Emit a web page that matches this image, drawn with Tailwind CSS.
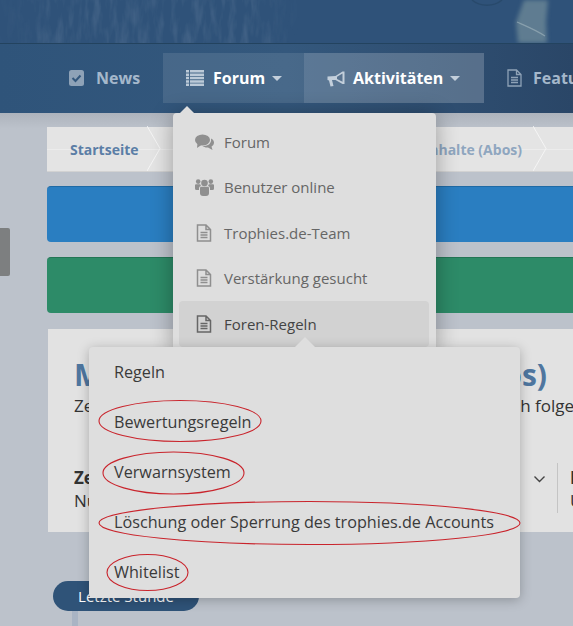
<!DOCTYPE html>
<html lang="de">

<head>
    <meta charset="UTF-8">
    <meta name="viewport" content="width=device-width, initial-scale=1.0">
    <title>Forum</title>
    <script src="https://cdn.jsdelivr.net/npm/@tailwindcss/browser@4"></script>
</head>

<body class="font-['Open_Sans',sans-serif]">
    <div class="relative w-[573px] h-[626px] overflow-hidden bg-[#bcc2cb]">

        <!-- banner -->
        <div class="relative h-[44px] overflow-hidden border-b border-[#23435f] bg-[#2f5279]">
            <svg class="absolute inset-0" width="573" height="43">
                <defs>
                    <filter id="grain"><feTurbulence type="fractalNoise" baseFrequency="0.14 0.035" numOctaves="3" seed="7" /><feColorMatrix values="0 0 0 0 0.72  0 0 0 0 0.8  0 0 0 0 0.88  0 0 0 1.1 -0.42" /></filter>
                    <linearGradient id="fade"><stop offset="0" stop-color="#fff" stop-opacity="0.1" /><stop offset="0.2" stop-color="#fff" /><stop offset="0.85" stop-color="#fff" /><stop offset="1" stop-color="#fff" stop-opacity="0" /></linearGradient>
                    <mask id="fademask"><rect width="300" height="43" fill="url(#fade)" /></mask>
                    <filter id="soft"><feGaussianBlur stdDeviation="2" /></filter>
                </defs>
                <g mask="url(#fademask)"><rect width="300" height="43" filter="url(#grain)" opacity="0.2" /></g>
                <path d="M518 43 L516 22 L524 0 L548 0 L546 22 L547 43 Z" fill="#6f8b99" opacity="0.75" filter="url(#soft)" />
                <path d="M517 22 C526 26 536 30 545 36" fill="none" stroke="#a4b8bf" stroke-width="1.2" opacity="0.6" />
                <path d="M472 0 C480 7 494 7 502 0" fill="none" stroke="#254563" stroke-width="1.5" opacity="0.6" />
            </svg>
        </div>

        <!-- nav -->
        <nav class="flex h-[69px] pl-[47px] pt-[9px] bg-gradient-to-r from-[#2f547a] via-[#34587d] to-[#2a4667] text-[16px] font-bold">
            <div class="flex w-[116px] h-[50px] shrink-0 items-center pl-[22px] text-[#a5b8cb]">
                <svg class="w-[16px] h-[16px]" viewBox="0 0 16 16"><rect width="15" height="16" rx="2.5" fill="#8ea2b7" /><path d="M3.5 8 L6.5 11 L11.5 5.5" fill="none" stroke="#34587d" stroke-width="2" /></svg>
                <span class="ml-[11px]">News</span>
            </div>
            <div class="flex w-[141px] h-[50px] shrink-0 items-center pl-[23px] bg-white/10 text-white">
                <svg class="w-[18px] h-[16px]" viewBox="0 0 18 16" fill="#bccad8"><path d="M0 0h3v2.5H0zM4 0h14v2.5H4zM0 3.4h3v2.5H0zM4 3.4h14v2.5H4zM0 6.8h3v2.5H0zM4 6.8h14v2.5H4zM0 10.2h3v2.5H0zM4 10.2h14v2.5H4zM0 13.6h3V16H0zM4 13.6h14V16H4z" /></svg>
                <span class="ml-[9px]">Forum</span>
                <span class="ml-[7px] w-0 h-0 border-x-[5px] border-x-transparent border-t-[5px] border-t-[#c3cfdb]"></span>
            </div>
            <div class="flex w-[180px] h-[50px] shrink-0 items-center pl-[23px] bg-white/20 text-white">
                <svg class="w-[18px] h-[17px]" viewBox="0 0 17 17" fill="#c3cfdb"><path d="M0 6.5 L8 6 L15 1.5 L17 1.5 L17 14 L15 14 L8 10 L4.5 10 L6 16 L3 16.5 L1.5 10.5 L0 10 Z" /><path d="M9.5 6.8 L15 3.6 L15 11.8 L9.5 8.9 Z" fill="#5a7490" /></svg>
                <span class="ml-[8px]">Aktivitäten</span>
                <span class="ml-[7px] w-0 h-0 border-x-[5px] border-x-transparent border-t-[5px] border-t-[#c3cfdb]"></span>
            </div>
            <div class="flex h-[50px] shrink-0 items-center pl-[23px] text-[#a5b8cb] whitespace-nowrap">
                <svg class="w-[15px] h-[18px]" viewBox="0 0 15 18" fill="none" stroke="#8ea2b7" stroke-width="1.3"><path d="M1 1h8.5L14 5.5V17H1zM9.5 1v4.5H14M4 8.5h7M4 11h7M4 13.5h7" /></svg>
                <span class="ml-[11px]">Features</span>
            </div>
        </nav>

        <!-- page -->
        <main class="flex flex-col pl-[47px] pt-[14px] bg-gradient-to-b from-[#adb3bc] from-0% to-[#bcc2cb] to-[3%]">
            <div class="relative flex h-[45px] w-[526px] shrink-0 items-center bg-[#e4e4e4] text-[14px] font-bold border-b border-[#d2d2d2] pt-[1px]">
                <div class="absolute left-0 right-0 top-[22px] h-px bg-white/30"></div>
                <div class="relative w-[114px] shrink-0 pl-[23px] text-[#5b7ea6]">Startseite
                    <svg class="absolute right-0 top-[-13px]" width="14" height="45" fill="none" stroke="#f5f5f5"><path d="M0 0 L13 22.5 L0 45" /></svg>
                </div>
                <div class="relative w-[386px] shrink-0 pr-[25px] text-right text-[#8fa6bf]">Ungelesene Inhalte (Abos)
                    <svg class="absolute right-0 top-[-13px]" width="14" height="45" fill="none" stroke="#f5f5f5"><path d="M0 0 L13 22.5 L0 45" /></svg>
                </div>
            </div>
            <div class="mt-[14px] h-[56px] w-[530px] shrink-0 rounded-[4px] bg-[#2a7ec1] border-t border-[#1f6aa5]"></div>
            <div class="mt-[15px] h-[56px] w-[530px] shrink-0 rounded-[4px] bg-[#2d8b68] border-t border-[#237555]"></div>
            <div class="mt-[16px] ml-[1px] h-[203px] w-[525px] shrink-0 bg-[#e2e2e2] pl-[26px] pt-[24px] text-[#333] overflow-hidden">
                <div class="flex w-[473px] justify-between text-[30px] leading-[44px] font-bold text-[#4f769f]">
                    <span>Mitglieder</span><span>(Abos)</span>
                </div>
                <div class="flex w-[560px] justify-between text-[17px] leading-[22px] -mt-[2px] whitespace-nowrap">
                    <span>Zeige alle Themen</span><span class="pr-[60px]">denen ich folge</span>
                </div>
                <div class="flex mt-[46px] h-[50px] text-[17px] leading-[23px] whitespace-nowrap">
                    <div class="w-[460px] shrink-0 pt-[3px]">
                        <div class="font-bold">Zeitraum</div>
                        <div>Nur heute</div>
                    </div>
                    <svg class="mt-[13px] shrink-0 w-[11px] h-[7px]" viewBox="0 0 11 7" fill="none" stroke="#444" stroke-width="1.4"><path d="M0.5 0.5 L5.5 5.5 L10.5 0.5" /></svg>
                    <div class="ml-[12px] w-px h-[50px] shrink-0 bg-[#c4c4c4]"></div>
                    <div class="ml-[12px] pt-[3px]">
                        <div class="font-bold">Inhalte</div>
                        <div>Unbegrenzt</div>
                    </div>
                </div>
            </div>
            <div class="mt-[49px] ml-[6px] flex h-[30px] w-[146px] shrink-0 items-center justify-center rounded-full bg-[#2f5378] text-[15px] text-white">Letzte Stunde</div>
            <div class="ml-[25px] h-[20px] w-[6px] shrink-0 bg-[#a9b4c4]"></div>
        </main>

        <!-- left tab -->
        <div class="absolute left-0 top-[228px] h-[48px] w-[10px] rounded-r-[2px] bg-[#7d7f80]"></div>

        <!-- forum dropdown -->
        <div class="absolute left-[173px] top-[113px] w-[263px] h-[240px] rounded-t-[4px] bg-[#dedede] shadow-[0_2px_22px_rgba(0,0,0,0.32)] px-[6px] pt-[6px] text-[15px] text-[#666]">
            <span class="absolute left-[7px] top-[-7px] w-0 h-0 border-x-[7px] border-x-transparent border-b-[7px] border-b-[#dedede]"></span>
            <div class="flex h-[45.5px] items-center pl-[16px]">
                <svg class="w-[19px] h-[16px]" viewBox="0 0 19 16" fill="#8f8f8f"><ellipse cx="7.5" cy="6" rx="7.5" ry="5.6" /><path d="M2.5 9 L2 14 L7 10.5Z" /><path d="M16 4.5 C18 5.5 19 7 19 8.5 C19 10.5 18 11.5 16.5 12.5 L17.5 16 L13 13.5 C11 13.7 8.5 13 7.5 12 C12 12.5 17 10 16 4.5Z" /></svg>
                <span class="ml-[10px]">Forum</span>
            </div>
            <div class="flex h-[45.5px] items-center pl-[16px]">
                <svg class="w-[19px] h-[18px]" viewBox="0 0 19 18" fill="#8f8f8f"><circle cx="9.5" cy="5" r="3.3" /><circle cx="3.2" cy="3.6" r="2.3" /><circle cx="15.8" cy="3.6" r="2.3" /><path d="M5 10 Q5 8.7 6.5 8.7 L12.5 8.7 Q14 8.7 14 10 L14 15 Q14 18 11 18 L8 18 Q5 18 5 15Z" /><path d="M0 7.3 Q0 6.3 1 6.3 L5.2 6.3 Q5.6 7.5 6 8 Q4 8.4 4 10 L4 12 L1.5 12 Q0 12 0 10.5Z" /><path d="M19 7.3 Q19 6.3 18 6.3 L13.8 6.3 Q13.4 7.5 13 8 Q15 8.4 15 10 L15 12 L17.5 12 Q19 12 19 10.5Z" /></svg>
                <span class="ml-[10px]">Benutzer online</span>
            </div>
            <div class="flex h-[45.5px] items-center pl-[17px]">
                <svg class="w-[16px] h-[18px]" viewBox="0 0 15 18" fill="none" stroke="#8f8f8f" stroke-width="1.5"><path d="M1 1h8.5L14 5.5V17H1zM9.5 1v4.5H14M4 8.5h7M4 11h7M4 13.5h7" /></svg>
                <span class="ml-[12px]">Trophies.de-Team</span>
            </div>
            <div class="flex h-[45.5px] items-center pl-[17px]">
                <svg class="w-[16px] h-[18px]" viewBox="0 0 15 18" fill="none" stroke="#8f8f8f" stroke-width="1.5"><path d="M1 1h8.5L14 5.5V17H1zM9.5 1v4.5H14M4 8.5h7M4 11h7M4 13.5h7" /></svg>
                <span class="ml-[12px]">Verstärkung gesucht</span>
            </div>
            <div class="flex h-[46px] w-[250px] items-center pl-[17px] rounded-[4px] bg-[#d2d2d2] text-[#444]">
                <svg class="w-[16px] h-[18px]" viewBox="0 0 15 18" fill="none" stroke="#666" stroke-width="1.5"><path d="M1 1h8.5L14 5.5V17H1zM9.5 1v4.5H14M4 8.5h7M4 11h7M4 13.5h7" /></svg>
                <span class="ml-[12px]">Foren-Regeln</span>
            </div>
        </div>

        <!-- rules submenu -->
        <div class="absolute left-[89px] top-[347px] w-[431px] h-[251px] rounded-[4px] bg-[#dedede] shadow-[0_2px_12px_rgba(0,0,0,0.25)] text-[16.2px] text-[#3a3a3a]">
            <span class="absolute left-[206px] top-[-10px] w-0 h-0 border-x-[10px] border-x-transparent border-b-[10px] border-b-[#dedede]"></span>
            <div class="flex h-[50px] items-center pl-[25px]">Regeln</div>
            <div class="flex h-[50px] items-center pl-[25px]">Bewertungsregeln</div>
            <div class="flex h-[50px] items-center pl-[25px]">Verwarnsystem</div>
            <div class="flex h-[50px] items-center pl-[25px]">Löschung oder Sperrung des trophies.de Accounts</div>
            <div class="flex h-[50px] items-center pl-[25px]">Whitelist</div>
        </div>

        <!-- red hand-drawn marks -->
        <svg class="absolute inset-0" width="573" height="626" fill="none" stroke="#c9242c" stroke-width="1.1">
            <ellipse cx="180" cy="421" rx="81" ry="20.5" />
            <ellipse cx="173.5" cy="473" rx="70.5" ry="21" />
            <ellipse cx="309.5" cy="523" rx="210.5" ry="21.5" />
            <ellipse cx="147.5" cy="572.5" rx="40.5" ry="18" />
        </svg>
    </div>
</body>

</html>
